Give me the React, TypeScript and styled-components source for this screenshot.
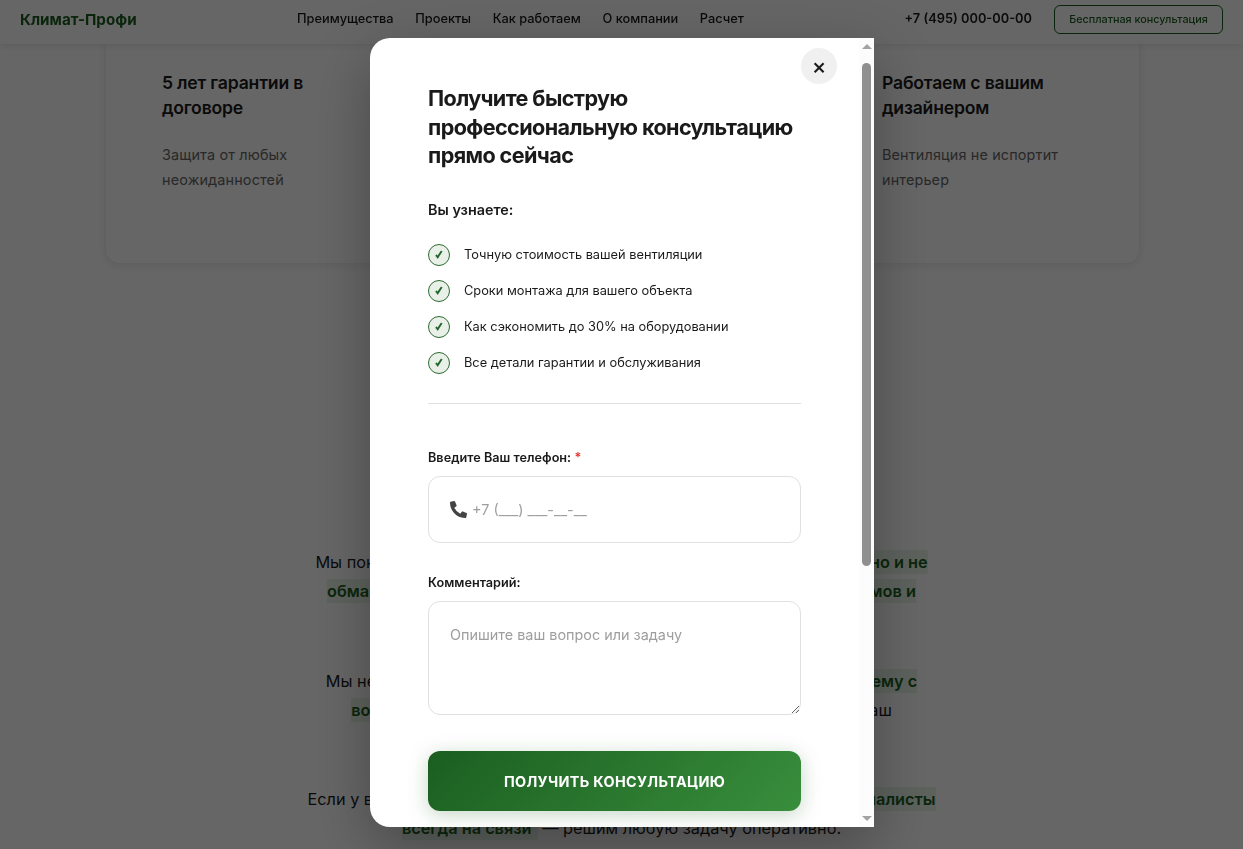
import styled, { createGlobalStyle } from 'styled-components';
import { FaPhoneAlt } from 'react-icons/fa';

const GlobalStyle = createGlobalStyle`
  html,
  body {
    margin: 0;
    padding: 0;
    height: 100%;
    overflow: hidden;
    background: #fff;
    font-family: Inter, 'Noto Sans', sans-serif;
    color: #1a1a1a;
  }
  * {
    box-sizing: border-box;
  }
`;

const navLinks = ['Преимущества', 'Проекты', 'Как работаем', 'О компании', 'Расчет'];

const benefits = [
  'Точную стоимость вашей вентиляции',
  'Сроки монтажа для вашего объекта',
  'Как сэкономить до 30% на оборудовании',
  'Все детали гарантии и обслуживания',
];

const CheckIcon = () => (
  <svg width="10" height="10" viewBox="0 0 10 10" aria-hidden="true">
    <path d="M1.6 5.6 L3.7 8.5 L8.2 1.4 L6.9 1 L3.6 6 L2.6 4.7 Z" fill="#1b5e20" stroke="#1b5e20" strokeWidth="0.5" />
  </svg>
);

export default function App() {
  return (
    <>
      <GlobalStyle />
      <Page>
        <CardsPanel>
          <Feature>
            <FeatureTitle>5 лет гарантии в договоре</FeatureTitle>
            <FeatureText>Защита от любых неожиданностей</FeatureText>
          </Feature>
          <Feature />
          <Feature>
            <FeatureTitle>Работаем с вашим дизайнером</FeatureTitle>
            <FeatureText>Вентиляция не испортит интерьер</FeatureText>
          </Feature>
        </CardsPanel>
        <AboutBlock>
          <AboutParagraph>
            Мы понимаем, как вам важен воздух в доме, потому <Mark>работаем честно и не
            <br />
            обманываем клиентов: никаких скрытых платежей и хитрых приёмов и
            <br />
            лишних услуг</Mark>.
          </AboutParagraph>
          <AboutParagraph>
            Мы не просто продаём вам оборудование, мы <Mark>решаем вашу проблему с
            <br />
            воздухом в квартире</Mark> и подбираем оптимальное решение под ваш
            <br />
            бюджет.
          </AboutParagraph>
          <AboutParagraph>
            Если у вас возникли какие-либо вопросы после монтажа, <Mark>наши специалисты
            <br />
            всегда на связи&nbsp;</Mark> — решим любую задачу оперативно.
          </AboutParagraph>
        </AboutBlock>
      </Page>

      <Header>
        <Logo>Климат-Профи</Logo>
        <Nav>
          {navLinks.map((link) => (
            <NavLink key={link}>{link}</NavLink>
          ))}
        </Nav>
        <HeaderPhone>+7 (495) 000-00-00</HeaderPhone>
        <HeaderButton>Бесплатная консультация</HeaderButton>
      </Header>

      <Overlay />

      <Modal>
        <CloseButton aria-label="Закрыть">×</CloseButton>
        <ModalTitle>Получите быструю профессиональную консультацию прямо сейчас</ModalTitle>
        <LearnTitle>Вы узнаете:</LearnTitle>
        <BenefitList>
          {benefits.map((item) => (
            <BenefitItem key={item}>
              <CheckBadge>
                <CheckIcon />
              </CheckBadge>
              {item}
            </BenefitItem>
          ))}
        </BenefitList>
        <Divider />
        <Field>
          <FieldLabel>
            Введите Ваш телефон: <Required>*</Required>
          </FieldLabel>
          <PhoneBox>
            <FaPhoneAlt size={17} color="#444" />
            <PhoneHint>+7 (___) ___-__-__</PhoneHint>
          </PhoneBox>
        </Field>
        <Field>
          <FieldLabel>Комментарий:</FieldLabel>
          <CommentBox placeholder="Опишите ваш вопрос или задачу" />
        </Field>
        <SubmitButton>ПОЛУЧИТЬ КОНСУЛЬТАЦИЮ</SubmitButton>
        <ScrollTrack>
          <ArrowUp />
          <ScrollThumb />
          <ArrowDown />
        </ScrollTrack>
      </Modal>
    </>
  );
}

const Page = styled.main`
  height: 849px;
  overflow: hidden;
  background: #fff;
`;

const CardsPanel = styled.section`
  width: 1035px;
  height: 284px;
  margin: -20px 0 0 105px;
  padding: 89px 0 0 56px;
  display: grid;
  grid-template-columns: 180px 180px 180px;
  column-gap: 180px;
  background: #fff;
  border: 1px solid #f0f0f0;
  border-radius: 14px;
  box-shadow: 0 2px 8px rgba(0, 0, 0, 0.08);
`;

const Feature = styled.article`
  min-width: 0;
`;

const FeatureTitle = styled.h3`
  margin: 0 0 22px;
  font-size: 17.6px;
  font-weight: 600;
  line-height: 25px;
  letter-spacing: -0.2px;
  color: #1a1a1a;
`;

const FeatureText = styled.p`
  margin: 0;
  font-size: 14.4px;
  line-height: 25px;
  letter-spacing: 0.15px;
  color: #666;
`;

const AboutBlock = styled.section`
  width: 700px;
  margin: 284px auto 0;
  text-align: center;
  font-size: 16.3px;
  line-height: 29px;
  color: #1a1a1a;
`;

const AboutParagraph = styled.p`
  margin: 0 0 31.5px;
`;

const Mark = styled.strong`
  font-weight: 600;
  color: #1b5e20;
  background: #e8f5e9;
  padding: 2px;
`;

const Header = styled.header`
  position: fixed;
  top: 0;
  left: 0;
  right: 0;
  height: 44px;
  padding: 0 20px 6px;
  display: flex;
  align-items: center;
  background: #fff;
  box-shadow: 0 2px 8px rgba(0, 0, 0, 0.1);
`;

const Logo = styled.div`
  width: 277px;
  font-size: 15.2px;
  font-weight: 700;
  color: #1b5e20;
  white-space: nowrap;
`;

const Nav = styled.nav`
  display: flex;
  gap: 21.6px;
  margin-bottom: 2px;
`;

const NavLink = styled.a`
  font-size: 12.8px;
  font-weight: 500;
  color: #1a1a1a;
  white-space: nowrap;
`;

const HeaderPhone = styled.div`
  margin: 0 0 2px auto;
  font-size: 12.8px;
  font-weight: 600;
  color: #1a1a1a;
  white-space: nowrap;
`;

const HeaderButton = styled.button`
  width: 169px;
  height: 29px;
  margin-left: 22px;
  padding: 0;
  font-family: inherit;
  font-size: 10.8px;
  font-weight: 500;
  color: #1b5e20;
  background: transparent;
  border: 1px solid #1b5e20;
  border-radius: 6px;
`;

const Overlay = styled.div`
  position: fixed;
  inset: 0;
  background: rgba(0, 0, 0, 0.6);
`;

const Modal = styled.section`
  position: fixed;
  top: 38px;
  left: 370px;
  width: 504px;
  height: 789px;
  padding: 46px 73px 0 58px;
  overflow: hidden;
  background: #fff;
  border-radius: 20px 0 0 20px;
  box-shadow: 0 20px 60px rgba(0, 0, 0, 0.3);
`;

const CloseButton = styled.button`
  position: absolute;
  top: 10px;
  right: 37px;
  width: 36px;
  height: 36px;
  padding: 0;
  font-family: inherit;
  font-size: 22px;
  font-weight: 500;
  line-height: 36px;
  color: #1a1a1a;
  background: #f0f0f0;
  border: 0;
  border-radius: 50%;
`;

const ModalTitle = styled.h2`
  margin: 0 0 31.5px;
  font-size: 21.6px;
  font-weight: 700;
  line-height: 28.5px;
  letter-spacing: -0.6px;
  color: #1a1a1a;
`;

const LearnTitle = styled.p`
  margin: 0 0 18px;
  font-size: 14.4px;
  font-weight: 600;
  line-height: 17px;
  color: #1a1a1a;
`;

const BenefitList = styled.ul`
  margin: 0;
  padding: 0;
  list-style: none;
`;

const BenefitItem = styled.li`
  height: 36px;
  display: flex;
  align-items: center;
  gap: 14px;
  font-size: 12.8px;
  color: #1a1a1a;
`;

const CheckBadge = styled.span`
  width: 22px;
  height: 22px;
  margin-top: 2px;
  display: flex;
  align-items: center;
  justify-content: center;
  flex-shrink: 0;
  background: #e8f0e8;
  border: 1px solid #2e6b33;
  border-radius: 50%;
`;

const Divider = styled.hr`
  height: 1px;
  margin: 23px 0 45px;
  border: 0;
  background: #e0e0e0;
`;

const Field = styled.div`
  margin-bottom: 31px;
`;

const FieldLabel = styled.div`
  margin-bottom: 10px;
  font-size: 12.7px;
  font-weight: 600;
  line-height: 17px;
  color: #1a1a1a;
`;

const Required = styled.span`
  color: #e53935;
`;

const PhoneBox = styled.div`
  height: 67px;
  padding: 0 21px;
  display: flex;
  align-items: center;
  gap: 5px;
  border: 1px solid #e0e0e0;
  border-radius: 12px;
`;

const PhoneHint = styled.span`
  font-size: 14.4px;
  color: #9e9e9e;
`;

const CommentBox = styled.textarea`
  display: block;
  width: 100%;
  height: 114px;
  padding: 24px 21px;
  font-family: inherit;
  font-size: 14.4px;
  color: #1a1a1a;
  border: 1px solid #e0e0e0;
  border-radius: 12px;
  outline: none;
  &::placeholder {
    color: #9e9e9e;
    opacity: 1;
  }
`;

const SubmitButton = styled.button`
  width: 100%;
  height: 60px;
  margin-top: 5px;
  font-family: inherit;
  font-size: 14.4px;
  font-weight: 700;
  letter-spacing: 0.35px;
  color: #fff;
  background: linear-gradient(135deg, #1b5e20, #388e3c);
  border: 0;
  border-radius: 12px;
  box-shadow: 0 4px 20px rgba(27, 94, 32, 0.25);
`;

const ScrollTrack = styled.div`
  position: absolute;
  top: 0;
  right: 0;
  bottom: 0;
  width: 15px;
  background: #fcfcfc;
`;

const ScrollThumb = styled.div`
  position: absolute;
  top: 25px;
  left: 3px;
  width: 9px;
  height: 503px;
  background: #8f8f8f;
  border-radius: 5px;
`;

const ArrowUp = styled.div`
  position: absolute;
  top: 6px;
  left: 3px;
  border-left: 5px solid transparent;
  border-right: 5px solid transparent;
  border-bottom: 5px solid #a3a3a3;
`;

const ArrowDown = styled.div`
  position: absolute;
  bottom: 6px;
  left: 3px;
  border-left: 5px solid transparent;
  border-right: 5px solid transparent;
  border-top: 5px solid #a3a3a3;
`;
